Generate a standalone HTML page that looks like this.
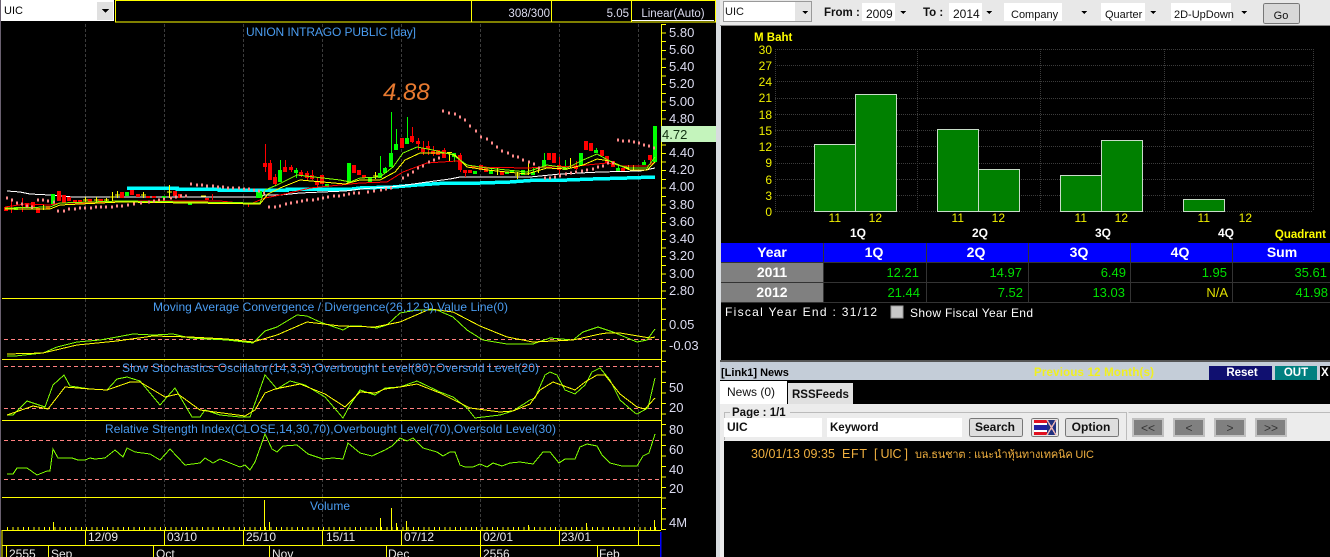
<!DOCTYPE html>
<html><head><meta charset="utf-8"><style>
html,body{margin:0;padding:0;background:#000;width:1330px;height:557px;overflow:hidden}
svg{display:block}
path,polyline,rect{shape-rendering:crispEdges}
text{font-family:"Liberation Sans","Noto Sans CJK SC",sans-serif}
.ax{fill:#dcdcf0;font-size:13px}
.ttl{fill:#4a9cf0;font-size:12px}
.dt{fill:#e8e8e8;font-size:12px}
.yy{fill:#f0f000;font-size:12px}
.hd{fill:#fff;font-size:14px;font-weight:bold;text-anchor:middle}
.gv{fill:#00e000;font-size:13px;text-anchor:end}
.btn{fill:#111;font-size:12px;font-weight:bold;text-anchor:middle}
</style></head><body>
<svg width="1330" height="557" viewBox="0 0 1330 557" xmlns="http://www.w3.org/2000/svg">
<rect width="1330" height="557" fill="#000"/>
<rect x="0" y="0" width="1" height="557" fill="#6a6070"/>

<!-- top bar left -->
<g>
<rect x="1" y="0" width="113" height="21" fill="#fff"/>
<rect x="97" y="2" width="16" height="18" fill="#e0e0e0"/>
<path d="M102 9h7l-3.500 4z" fill="#000"/>
<path d="M115.500 .5H715.500V22H115.500Z" fill="none" stroke="#ffff00"/>
<path d="M471.500 0V22M551.500 0V22M631.500 0V22" stroke="#ffff00"/>
<path d="M632 20.500H714" stroke="#fff"/>
</g>
<text x="4" y="14" fill="#000" font-size="11">UIC</text>
<text x="550" y="17" text-anchor="end" fill="#dcdcf0" font-size="11.500">308/300</text>
<text x="629" y="17" text-anchor="end" fill="#dcdcf0" font-size="11.500">5.05</text>
<text x="673" y="17" text-anchor="middle" fill="#dcdcf0" font-size="11.500">Linear(Auto)</text>

<!-- grid verticals -->
<path d="M85.500 24V530M164.500 24V530M243.500 24V530M322.500 24V530M401.500 24V530M480.500 24V530M559.500 24V530M638.500 24V530" stroke="#3c3c3c" stroke-dasharray="3 2"/>

<!-- panel lines -->
<g stroke="#ffff00" fill="none">
<path d="M2 298.500H661M2 359.500H661M2 420.500H661M2 497.500H661M2 530.500H661M2 545.500H661"/>
<path d="M2 530V557M6.500 545V557M48.500 545V557M153.500 545V557M269.500 545V557M386.500 545V557M480.500 545V557M597.500 545V557"/>
<path d="M85.500 530V545M164.500 530V545M243.500 530V545M322.500 530V545M401.500 530V545M480.500 530V545M559.500 530V545M638.500 530V545"/>
<path d="M661.500 24V530"/>
<path d="M661 24.500H666" />
<path d="M663.500 24V292" stroke-width="5" stroke-dasharray="1 7.600" stroke-dashoffset="0"/>
<path d="M663.500 298V530" stroke-width="5" stroke-dasharray="1 9.500"/>
<path d="M7 528.500H656" stroke-width="3" stroke-dasharray="1 4.270"/>
<path d="M53.500 522V530M264.500 500V530M269.500 522V530M380.500 518V530M391.500 508V530M396.500 523V530M406.500 521V530M528.500 525V530M586.500 523V530M654.500 520V530"/>
</g>
<path d="M660.500 532V557" stroke="#0000ff" stroke-width="1.500"/>

<!-- dashed pink levels -->
<path d="M4 339.500H661M4 366.500H661M4 408.500H661M4 440.500H661M4 479.500H661" stroke="#ff8080" stroke-dasharray="4 3"/>

<!-- cyan & MAs -->
<polyline fill="none" stroke="#00ffff" stroke-width="3.500" points="127,188 177,188 177,189 219,189 219,190 287,190 287,189 352,189 360,188 393,187 417,185 447,183 480,183 510,182 537,180 567,180 593,179 627,178 655,177"/>
<polyline fill="none" stroke="#fff" stroke-width="1" points="7,191 20,192 30,194 50,195 73,197 257,197 265,195 280,195 300,193 345,191 360,189 400,186 420,183 450,179 460,177 530,177 560,174 600,172 640,171 655,168"/>

<!-- candles: wicks -->
<path fill="none" stroke="#ff0000" stroke-width="1" d="M11.500 200V213M22.500 198V212M212.500 194V200M248.500 203V207M265.500 144V172M270.500 160V180M275.500 174V186M285.500 160V172M291.500 165V172M301.500 170V177M307.500 171V180M312.500 170V180M317.500 177V187M412.500 127V143M418.500 138V150M423.500 141V155M428.500 141V155M433.500 146V156M444.500 148V158M460.500 153V172M465.500 170V177M559.500 157V177M576.500 161V170M650.500 155V165"/>
<path fill="none" stroke="#ff0000" stroke-width="4" d="M6 207V211M27 203V207M33 202V208M38 208V213M48 206V209M59 191V201M64 195V203M69 197V201M75 200V203M80 200V203M90 199V203M101 199V202M122 192V198M132 190V195M138 194V197M148 196V198M154 196V198M175 191V196M180 194V198M207 198V200M265 163V167M270 163V180M275 177V184M285 167V172M291 167V170M301 172V175M307 173V178M312 175V179M317 182V185M322 175V184M354 165V173M359 170V175M364 175V178M402 138V148M412 136V142M418 141V144M423 148V152M428 146V149M433 151V154M438 150V155M444 150V158M460 155V170M465 170V173M470 170V173M481 165V170M486 167V172M502 172V175M549 153V160M554 153V163M559 165V170M576 166V169M586 141V150M591 143V151M602 150V156M607 156V163M613 161V167M623 168V171M650 155V160"/>
<path fill="none" stroke="#00ff00" stroke-width="1" d="M280.500 160V182M296.500 168V178M380.500 156V178M385.500 167V173M391.500 112V167M396.500 129V150M407.500 117V144M454.500 153V162M491.500 167V174M533.500 167V175M544.500 153V168M565.500 160V170M596.500 148V153M618.500 165V171M644.500 160V165M655.500 126V162"/>
<path fill="none" stroke="#00ff00" stroke-width="4" d="M16 207V210M53 194V205M127 192V196M164 196V198M190 201V205M258 192V198M260 191V198M280 170V182M296 170V173M327 184V187M349 163V183M370 178V182M380 173V178M385 168V173M391 153V167M396 144V150M407 138V144M454 153V157M475 171V174M491 170V174M507 172V174M512 170V173M523 170V175M533 172V175M544 160V168M565 168V170M581 153V166M596 150V153M618 168V171M644 162V165M655 126V162"/>
<path fill="none" stroke="#ffff00" stroke-width="1" d="M43.500 204V210M41 207H46M85.500 197V203M83 200H88M96.500 197V203M94 200H99M106.500 198V202M104 200H109M112.500 192V202M110 197H115M117.500 191V198M115 195H120M143.500 192V198M141 195H146M169.500 185V198M167 192H172M201 196H206M375.500 172V179M373 176H378M449.500 152V162M447 152.500H452M497.500 168V175M517.500 172V179M515 175H520M528.500 162V175M538.500 167V173M570.500 158V168M628.500 165V170M626 168H631M633.500 165V170M631 168H636"/>

<polyline fill="none" stroke="#ff0000" stroke-width="1" points="5,207 25,204 50,205 60,203 90,203 130,201 180,201 220,201 250,204 265,198 285,194 310,188 360,183 387,182 403,172 427,163 457,161 473,167 527,168 547,167 577,166 607,163 623,166 647,166 655,162"/>
<polyline fill="none" stroke="#ffff00" stroke-width="1" points="5,209 50,209 60,205 120,202 260,204 268,194 280,188 300,180 345,184 360,180 380,180 395,172 405,160 420,153 445,153 455,155 467,167 487,170 527,174 547,168 567,169 583,165 597,159 610,161 630,170 647,170 655,162"/>
<polyline fill="none" stroke="#80ff00" stroke-width="1" points="5,208 50,207 60,203 120,201 260,203 265,190 277,185 297,175 340,180 350,182 360,178 380,177 393,167 403,153 417,147 433,150 453,155 467,165 487,168 527,172 547,165 567,168 583,160 597,154 617,165 630,168 647,168 655,157"/>

<!-- SAR -->
<path fill="none" stroke="#ff8a8a" stroke-width="3" d="M6 198h2M11 200h2M16 203h2M21 204h2M26 206h2M31 207h2M37 200h2M42 200h2M47 201h2M53 202h2M57 211h2M63 211h2M68 209h2M74 209h2M79 208h2M84 208h2M90 208h2M95 207h2M100 207h2M105 207h2M111 207h2M116 206h2M121 206h2M127 205h2M133 204h2M140 203h2M148 202h2M153 201h2M158 200h2M163 199h2M170 198h2M175 197h2M180 196h2M185 196h2M190 184h2M196 185h2M201 185h2M206 186h2M212 186h2M217 187h2M222 187h2M227 188h2M232 188h2M238 188h2M243 189h2M248 189h2M253 190h2M258 191h2M263 193h2M268 207h2M274 207h2M279 206h2M285 204h2M290 203h2M296 202h2M301 201h2M306 200h2M312 200h2M317 199h2M322 198h2M327 197h2M333 196h2M338 196h2M343 195h2M348 194h2M353 193h2M358 193h2M367 192h2M373 191h2M380 190h2M385 189h2M390 188h2M402 178h2M407 175h2M412 172h2M417 168h2M422 166h2M428 162h2M433 160h2M438 158h2M442 111h2M448 113h2M454 114h2M459 117h2M464 120h2M469 126h2M475 131h2M480 137h2M486 139h2M491 143h2M496 147h2M501 151h2M507 153h2M512 156h2M517 157h2M522 160h2M528 162h2M533 164h2M538 168h2M544 178h2M549 178h2M554 177h2M559 176h2M565 174h2M570 173h2M575 172h2M581 171h2M586 170h2M592 169h2M597 167h2M602 166h2M607 163h2M612 163h2M617 140h2M622 141h2M628 141h2M633 142h2M638 143h2M643 145h2M648 146h2M653 148h2"/>

<!-- MACD -->
<polyline fill="none" stroke="#80ff00" points="7,356 15,356 43,353 57,347 77,342 100,340 117,337 133,334 153,335 173,334 190,338 227,340 253,343 265,331 277,327 297,315 307,316 320,322 343,330 350,326 360,326 377,328 387,325 400,313 417,310 437,310 453,317 467,330 483,340 507,344 533,344 550,338 573,340 583,332 598,327 613,332 637,342 647,340 655,329"/>
<polyline fill="none" stroke="#ffff00" points="7,354 43,353 77,345 117,341 153,336 190,337 227,339 253,342 277,335 307,322 340,326 375,327 400,322 430,309 453,312 480,326 507,337 533,342 573,340 600,334 607,333 620,333 650,338 655,337"/>
<!-- Stoch -->
<polyline fill="none" stroke="#80ff00" points="7,415 13,415 27,401 45,407 53,385 64,375 70,386 90,389 107,390 117,379 127,377 140,381 160,405 175,388 192,417 200,417 205,410 220,415 240,417 250,417 265,375 277,389 290,381 305,385 325,397 343,418 350,405 360,390 375,395 385,388 400,387 417,381 440,392 453,397 467,408 475,418 500,415 513,411 530,400 535,398 545,375 550,372 557,375 565,390 575,394 585,385 592,372 600,368 610,380 620,400 635,413 637,414 648,408 655,378"/>
<polyline fill="none" stroke="#ffff00" points="7,415 33,406 48,409 65,387 90,389 107,390 130,382 140,382 165,397 178,394 200,410 215,412 245,416 255,410 265,393 275,389 300,384 325,394 345,407 360,392 375,393 385,389 400,387 417,384 440,393 470,408 500,412 513,411 530,404 540,390 553,382 575,390 585,382 597,375 605,375 620,394 637,407 645,409 655,398"/>
<!-- RSI -->
<polyline fill="none" stroke="#80ff00" points="7,474 13,474 17,468 27,468 37,475 47,471 50,471 53,449 58,458 72,458 78,460 85,460 90,458 95,459 105,458 115,450 123,457 127,448 135,452 150,454 160,460 170,449 185,465 200,463 205,458 213,463 220,459 230,463 240,467 245,465 250,470 255,462 265,434 272,449 277,452 283,446 297,445 308,454 320,458 323,459 333,458 343,459 348,443 360,453 372,456 385,450 392,446 400,438 407,441 413,438 423,448 437,452 443,456 450,452 455,452 460,465 465,467 473,467 480,464 487,467 493,463 502,466 510,463 520,462 533,464 543,452 550,452 559,463 565,459 575,459 580,447 587,444 597,446 602,455 610,463 622,466 637,466 643,456 649,453 655,434"/>

<!-- titles -->
<text class="ttl" x="246" y="36" textLength="170">UNION INTRAGO PUBLIC [day]</text>
<text x="383" y="100" fill="#e87a30" font-size="24" font-style="italic">4.88</text>
<text class="ttl" x="153" y="311" textLength="355">Moving Average Convergence / Divergence(26,12,9),Value Line(0)</text>
<text class="ttl" x="122" y="372" textLength="417">Slow Stochastics Oscillator(14,3,3),Overbought Level(80),Oversold Level(20)</text>
<text class="ttl" x="105" y="433" textLength="451">Relative Strength Index(CLOSE,14,30,70),Overbought Level(70),Oversold Level(30)</text>
<text class="ttl" x="330" y="510" text-anchor="middle">Volume</text>

<!-- axis labels -->
<g class="ax" text-anchor="start">
<text class="ax" x="669" y="37">5.80</text><text class="ax" x="669" y="54">5.60</text><text class="ax" x="669" y="71">5.40</text><text class="ax" x="669" y="88">5.20</text><text class="ax" x="669" y="106">5.00</text><text class="ax" x="669" y="123">4.80</text><text class="ax" x="669" y="157">4.40</text><text class="ax" x="669" y="174">4.20</text><text class="ax" x="669" y="191">4.00</text><text class="ax" x="669" y="209">3.80</text><text class="ax" x="669" y="226">3.60</text><text class="ax" x="669" y="243">3.40</text><text class="ax" x="669" y="260">3.20</text><text class="ax" x="669" y="278">3.00</text><text class="ax" x="669" y="295">2.80</text>
<text class="ax" x="669" y="329">0.05</text><text class="ax" x="669" y="350">-0.03</text>
<text class="ax" x="669" y="392">50</text><text class="ax" x="669" y="412">20</text>
<text class="ax" x="669" y="434">80</text><text class="ax" x="669" y="454">60</text><text class="ax" x="669" y="474">40</text><text class="ax" x="669" y="493">20</text>
<text class="ax" x="669" y="527">4M</text>
</g>
<rect x="661" y="126" width="55" height="16" fill="#c4f4bc"/>
<text x="662" y="139" fill="#113311" font-size="13">4.72</text>

<!-- date labels -->
<text class="dt" x="88" y="541">12/09</text><text class="dt" x="167" y="541">03/10</text><text class="dt" x="246" y="541">25/10</text><text class="dt" x="326" y="541">15/11</text><text class="dt" x="404" y="541">07/12</text><text class="dt" x="483" y="541">02/01</text><text class="dt" x="561" y="541">23/01</text>
<text class="dt" x="9" y="558">2555</text><text class="dt" x="51" y="558">Sep</text><text class="dt" x="156" y="558">Oct</text><text class="dt" x="272" y="558">Nov</text><text class="dt" x="388" y="558">Dec</text><text class="dt" x="483" y="558">2556</text><text class="dt" x="599" y="558">Feb</text>

<!-- separator -->
<rect x="716" y="0" width="5" height="557" fill="#d8dce0"/>

<!-- right toolbar -->
<rect x="720" y="0" width="610" height="25" fill="#e8e8e8"/>
<rect x="720" y="25" width="610" height="1" fill="#888"/>
<g>
<rect x="723.500" y="1.500" width="88" height="20" fill="#fff" stroke="#999"/>
<rect x="795" y="2" width="16" height="19" fill="#e4e4e4"/>
<rect x="862" y="3" width="33" height="18" fill="#fff"/>
<rect x="949" y="3" width="33" height="18" fill="#fff"/>
<rect x="1004" y="3" width="58" height="18" fill="#fff"/>
<rect x="1101" y="3" width="44" height="18" fill="#fff"/>
<rect x="1171" y="3" width="60" height="18" fill="#fff"/>
</g>
<path d="M802 11h6l-3 3zM900 11h6l-3 3zM986 11h6l-3 3zM1081 11h6l-3 3zM1150 11h6l-3 3zM1241 11h6l-3 3z" fill="#000"/>
<text x="725" y="15" fill="#111" font-size="11">UIC</text>
<text x="824" y="16" fill="#111" font-size="11.500" font-weight="bold">From :</text>
<text x="866" y="18" fill="#111" font-size="12">2009</text>
<text x="923" y="16" fill="#111" font-size="11.500" font-weight="bold">To :</text>
<text x="953" y="18" fill="#111" font-size="12">2014</text>
<text x="1011" y="18" fill="#111" font-size="11">Company</text>
<text x="1105" y="18" fill="#111" font-size="11">Quarter</text>
<text x="1174" y="18" fill="#111" font-size="11">2D-UpDown</text>
<rect x="1263.500" y="3.500" width="36" height="20" rx="2" fill="#d8d8d8" stroke="#777"/>
<text x="1281" y="19" text-anchor="middle" fill="#111" font-size="11">Go</text>

<!-- bar chart -->
<text x="754" y="41" fill="#ffff00" font-size="11.500" font-weight="bold">M Baht</text>
<g stroke="#3c3c3c" fill="none" stroke-dasharray="1 1">
<path d="M775 49.500H1313M775 65.500H1313M775 81.500H1313M775 98.500H1313M775 114.500H1313M775 130.500H1313M775 146.500H1313M775 163.500H1313M775 179.500H1313M775 195.500H1313M775 211.500H1313"/>
<path d="M775.500 49V211M917.500 49V211M1040.500 49V211M1164.500 49V211M1313.500 49V211"/>
</g>
<g fill="#008000" stroke="#c8dcc8">
<rect x="814.500" y="144.500" width="41" height="67"/><rect x="855.500" y="94.500" width="41" height="117"/>
<rect x="937.500" y="129.500" width="41" height="82"/><rect x="978.500" y="169.500" width="41" height="42"/>
<rect x="1060.500" y="175.500" width="41" height="36"/><rect x="1101.500" y="140.500" width="41" height="71"/>
<rect x="1183.500" y="199.500" width="41" height="12"/>
</g>
<g class="yy" text-anchor="end">
<text class="yy" x="772" y="54">30</text><text class="yy" x="772" y="70">27</text><text class="yy" x="772" y="86">24</text><text class="yy" x="772" y="102">21</text><text class="yy" x="772" y="119">18</text><text class="yy" x="772" y="135">15</text><text class="yy" x="772" y="151">12</text><text class="yy" x="772" y="167">9</text><text class="yy" x="772" y="184">6</text><text class="yy" x="772" y="200">3</text><text class="yy" x="772" y="216">0</text>
<text class="yy" x="841" y="222">11</text><text class="yy" x="882" y="222">12</text><text class="yy" x="964" y="222">11</text><text class="yy" x="1005" y="222">12</text><text class="yy" x="1087" y="222">11</text><text class="yy" x="1128" y="222">12</text><text class="yy" x="1210" y="222">11</text><text class="yy" x="1252" y="222">12</text>
</g>
<g fill="#fff" font-size="12" font-weight="bold" text-anchor="middle">
<text x="858" y="237">1Q</text><text x="980" y="237">2Q</text><text x="1103" y="237">3Q</text><text x="1226" y="237">4Q</text>
</g>
<text x="1326" y="238" text-anchor="end" fill="#ffff00" font-size="11.500" font-weight="bold">Quadrant</text>

<!-- table -->
<rect x="721" y="243" width="609" height="19" fill="#0000ff"/>
<rect x="721" y="263" width="102" height="19" fill="#808080"/>
<rect x="721" y="283" width="102" height="19" fill="#808080"/>
<path d="M721 262.500H1330M721 282.500H1330M721 302.500H1330M823.500 243V302M926.500 243V302M1028.500 243V302M1130.500 243V302M1232.500 243V302" stroke="#333"/>
<text class="hd" x="772" y="257">Year</text><text class="hd" x="874" y="257">1Q</text><text class="hd" x="976" y="257">2Q</text><text class="hd" x="1079" y="257">3Q</text><text class="hd" x="1180" y="257">4Q</text><text class="hd" x="1282" y="257">Sum</text>
<text class="hd" x="772" y="277">2011</text><text class="hd" x="772" y="297">2012</text>
<text class="gv" x="919" y="277">12.21</text><text class="gv" x="1022" y="277">14.97</text><text class="gv" x="1126" y="277">6.49</text><text class="gv" x="1227" y="277">1.95</text><text class="gv" x="1327" y="277">35.61</text>
<text class="gv" x="920" y="297">21.44</text><text class="gv" x="1023" y="297">7.52</text><text class="gv" x="1125" y="297">13.03</text><text x="1228" y="297" text-anchor="end" fill="#e0e000" font-size="13">N/A</text><text class="gv" x="1328" y="297">41.98</text>
<text x="725" y="316" fill="#fff" font-size="12" textLength="152">Fiscal Year End : 31/12</text>
<rect x="891" y="306" width="12" height="12" fill="#c8c8c8" stroke="#999"/>
<text x="910" y="317" fill="#fff" font-size="12" textLength="123">Show Fiscal Year End</text>

<!-- news panel -->
<rect x="720" y="360" width="610" height="2" fill="#555"/>
<rect x="720" y="362" width="610" height="18" fill="#c4cdd8"/>
<text x="721" y="376" fill="#000" font-size="11" font-weight="bold">[Link1] News</text>
<text x="1034" y="376" fill="#f0f020" font-size="11.500" font-weight="bold" textLength="120">Previous 12 Month(s)</text>
<rect x="1209" y="366" width="63" height="14" fill="#101070"/>
<text x="1242" y="376" fill="#fff" font-size="11.500" font-weight="bold" text-anchor="middle">Reset</text>
<rect x="1275" y="366" width="42" height="14" fill="#008080"/>
<text x="1296" y="376" fill="#fff" font-size="11.500" font-weight="bold" text-anchor="middle">OUT</text>
<rect x="1320" y="366" width="10" height="14" fill="#000"/>
<text x="1321" y="376" fill="#fff" font-size="11.500" font-weight="bold">X</text>

<rect x="720" y="380" width="610" height="24" fill="#000"/>
<rect x="720" y="381" width="67" height="23" fill="#fff"/>
<rect x="788" y="383" width="65" height="21" fill="#e0e0e0"/>
<text x="727" y="396" fill="#111" font-size="12">News (0)</text>
<text x="792" y="398" fill="#111" font-size="11.500" font-weight="bold">RSSFeeds</text>

<rect x="720" y="404" width="610" height="153" fill="#ececec"/>
<path d="M724.500 440V412.500H730M790 412.500H1126.500V440M1128.500 412.500H1330" fill="none" stroke="#bbb"/>
<text x="732" y="416" fill="#111" font-size="11.500" font-weight="bold">Page : 1/1</text>
<rect x="724" y="418" width="98" height="19" fill="#fff"/>
<rect x="827" y="418" width="135" height="19" fill="#fff"/>
<text x="727" y="431" fill="#111" font-size="12" font-weight="bold">UIC</text>
<text x="830" y="431" fill="#111" font-size="11.500" font-weight="bold">Keyword</text>
<g fill="#dedede" stroke="#777">
<rect x="969.500" y="418.500" width="53" height="18" rx="2"/>
<rect x="1031.500" y="418.500" width="27" height="18" rx="2" fill="#e8e8e8"/>
<rect x="1065.500" y="418.500" width="53" height="18" rx="2"/>
</g>
<text class="btn" x="995" y="431">Search</text>
<text class="btn" x="1091" y="431">Option</text>
<g>
<rect x="1034" y="420" width="13" height="15" fill="#fff"/>
<rect x="1034" y="420" width="13" height="3" fill="#e01020"/><rect x="1034" y="432" width="13" height="3" fill="#e01020"/><rect x="1034" y="425" width="13" height="5" fill="#2020a0"/>
<rect x="1047" y="420" width="9" height="15" fill="#203080"/>
</g>
<path d="M1047 420l9 15M1056 420l-9 15" stroke="#e8b0b0" stroke-width="1.500"/>
<g fill="#808080" stroke="#c0c0c0" stroke-width="2">
<rect x="1133" y="419" width="30" height="17"/><rect x="1174" y="419" width="30" height="17"/><rect x="1215" y="419" width="30" height="17"/><rect x="1256" y="419" width="30" height="17"/>
</g>
<g fill="#333" font-size="12" text-anchor="middle">
<text x="1148" y="432">&lt;&lt;</text><text x="1189" y="432">&lt;</text><text x="1230" y="432">&gt;</text><text x="1271" y="432">&gt;&gt;</text>
</g>
<rect x="724" y="441" width="606" height="116" fill="#000"/>
<text x="751" y="458" fill="#f0b040" font-size="12.500" textLength="84">30/01/13 09:35</text>
<text x="842" y="458" fill="#f0b040" font-size="12.500" textLength="25">EFT</text>
<text x="874" y="458" fill="#f0b040" font-size="12.500" textLength="34">[ UIC ]</text>
<text x="915" y="458" fill="#f0b040" font-size="11" textLength="179">บล.ธนชาต : แนะนำหุ้นทางเทคนิค UIC</text>
</svg>
</body></html>
